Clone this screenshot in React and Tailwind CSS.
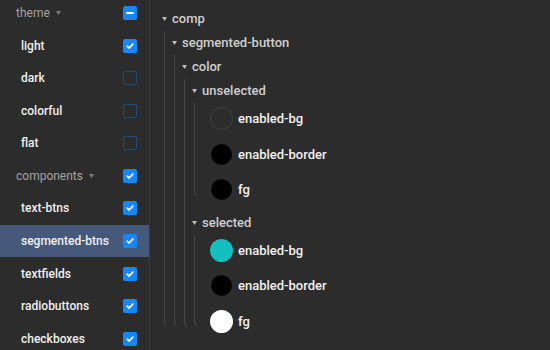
import { Fragment } from 'react'

// Lista lateral de capas con sus casillas
const capas = [
  { nombre: 'theme', grupo: true, estado: 'mixto' },
  { nombre: 'light', estado: 'si' },
  { nombre: 'dark', estado: 'no' },
  { nombre: 'colorful', estado: 'no' },
  { nombre: 'flat', estado: 'no' },
  { nombre: 'components', grupo: true, estado: 'si' },
  { nombre: 'text-btns', estado: 'si' },
  { nombre: 'segmented-btns', estado: 'si', activo: true },
  { nombre: 'textfields', estado: 'si' },
  { nombre: 'radiobuttons', estado: 'si' },
  { nombre: 'checkboxes', estado: 'si' }
]

// Árbol de tokens
const arbol = {
  nombre: 'comp',
  hijos: [
    {
      nombre: 'segmented-button',
      hijos: [
        {
          nombre: 'color',
          hijos: [
            {
              nombre: 'unselected',
              hijos: [
                { nombre: 'enabled-bg', color: 'vacio' },
                { nombre: 'enabled-border', color: 'negro' },
                { nombre: 'fg', color: 'negro' }
              ]
            },
            {
              nombre: 'selected',
              hijos: [
                { nombre: 'enabled-bg', color: 'teal' },
                { nombre: 'enabled-border', color: 'negro' },
                { nombre: 'fg', color: 'blanco' }
              ]
            }
          ]
        }
      ]
    }
  ]
}

const swatches = {
  vacio: 'border border-[#414141] bg-transparent',
  negro: 'border border-[#363636] bg-black',
  teal: 'bg-[#14bfbf]',
  blanco: 'bg-white'
}

function Casilla({ estado }) {
  if (estado === 'no') {
    return <div className="w-[14px] h-[14px] rounded-[2px] border border-[#1f4d75]" />
  }
  return (
    <div className="w-[14px] h-[14px] rounded-[2px] bg-[#1687f5] flex items-center justify-center">
      {estado === 'mixto' ? (
        <div className="w-[8px] h-[2px] rounded-full bg-white" />
      ) : (
        <svg width="10" height="10" viewBox="0 0 10 10">
          <path d="M2.2 5.2 L4.2 7 L7.8 3.2" fill="none" stroke="white" strokeWidth="1.7" strokeLinecap="round" strokeLinejoin="round" />
        </svg>
      )}
    </div>
  )
}

function Flecha({ className }) {
  return (
    <svg width="5" height="4" viewBox="0 0 5 4" className={className}>
      <path d="M0 0 H5 L2.5 4 Z" fill="currentColor" />
    </svg>
  )
}

function Nodo({ nodo }) {
  if (nodo.color) {
    return (
      <div className="h-[35.5px] flex items-center pl-[8px] gap-[5px]">
        <div className={`w-[23px] h-[23px] rounded-full ${swatches[nodo.color]}`} />
        <span className="text-[13px] font-medium text-[#f2f2f2]">{nodo.nombre}</span>
      </div>
    )
  }
  const sonHojas = nodo.hijos.every(h => h.color)
  return (
    <div>
      <div className="h-[24px] flex items-center">
        <Flecha className="text-[#bdbdbd] mr-[5px]" />
        <span className="text-[13px] font-medium text-[#cfcfcf]">{nodo.nombre}</span>
      </div>
      <div className="flex">
        <div className="flex-none w-[10px] flex">
          <div className="ml-[2px] w-[3px] mb-[16px] border-l border-b border-[#454545] rounded-bl-[3px]" />
        </div>
        <div className={sonHojas ? 'flex flex-col -mt-[2px] mb-[3px]' : 'flex flex-col'}>
          {nodo.hijos.map((h, i) => (
            <Nodo key={i} nodo={h} />
          ))}
        </div>
      </div>
    </div>
  )
}

export default function App() {
  return (
    <div
      className="flex w-[550px] h-[350px] overflow-hidden bg-[#2c2c2c]"
      style={{ fontFamily: 'Roboto, "Liberation Sans", sans-serif' }}
    >
      <div className="flex-none w-[150px] border-r border-[#3a3a3a] flex flex-col">
        <div className="-mt-[3.4px]">
          {capas.map((c, i) => (
            <div
              key={i}
              className={`h-[32.6px] flex items-center justify-between pr-[12px] ${
                c.grupo ? 'pl-[16px]' : 'pl-[21px]'
              } ${c.activo ? 'bg-[#46597a]' : ''}`}
            >
              {c.grupo ? (
                <div className="flex items-center gap-[6px]">
                  <span className="text-[12px] text-[#a3a3a3]">{c.nombre}</span>
                  <Flecha className="text-[#7c7c7c]" />
                </div>
              ) : (
                <span className="text-[12px] font-medium text-[#f0f0f0]">{c.nombre}</span>
              )}
              <Casilla estado={c.estado} />
            </div>
          ))}
        </div>
      </div>
      <div className="flex-1 pl-[12px] pt-[7px]">
        <Nodo nodo={arbol} />
      </div>
    </div>
  )
}
